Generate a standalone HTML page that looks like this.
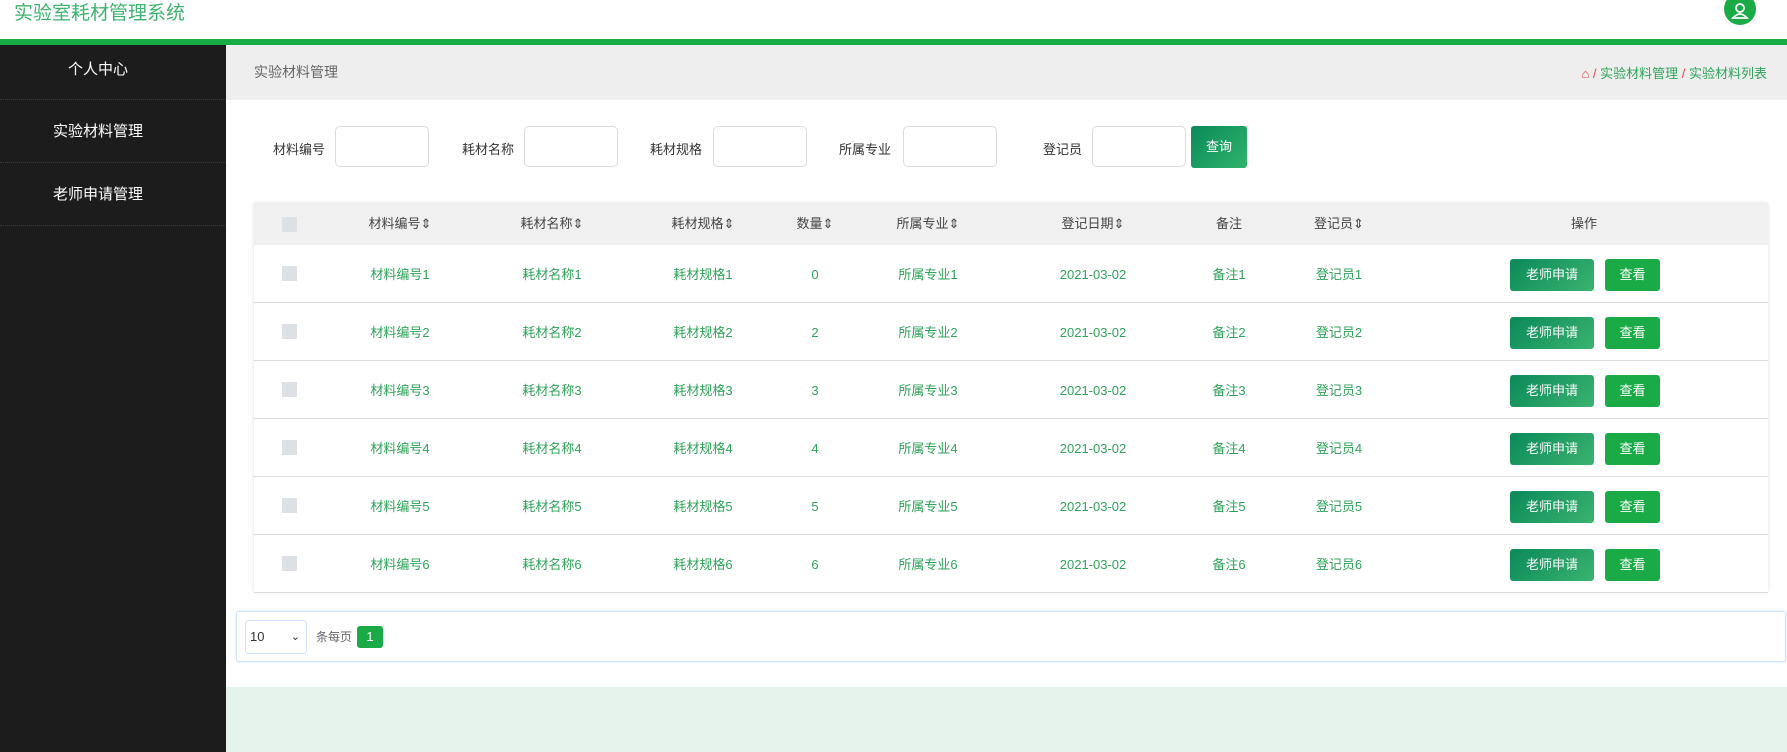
<!DOCTYPE html>
<html><head><meta charset="utf-8"><style>
*{margin:0;padding:0;box-sizing:border-box}
body{width:1787px;height:752px;overflow:hidden;background:#fff;font-family:"Liberation Sans","Noto Sans CJK SC",sans-serif;position:relative}
.a{position:absolute}
.title{left:14px;top:-2px;font-size:19px;color:#3cb371}
.gl{left:0;top:39px;width:1787px;height:6px;background:#1aab47}
.av{left:1724px;top:-7px;width:32px;height:32px;border-radius:50%;background:#1aab47}
.side{left:0;top:45px;width:226px;height:707px;background:#1c1c1c}
.si{position:absolute;left:0;width:226px;border-bottom:1px dotted #3a3a3a;color:#fff;font-size:15px;text-align:center;padding-right:30px}
.bc{left:226px;top:45px;width:1561px;height:55px;background:#eee}
.lab{font-size:13px;color:#333}
.inp{height:41px;width:94px;border:1px solid #ddd;border-radius:5px;background:#fff}
.btn{color:#fff;font-size:13px;text-align:center;border-radius:3px}
.tbl{left:254px;top:203px;width:1514px;height:389px;box-shadow:0 0 4px rgba(0,0,0,.12);background:#fff}
.th{top:0;height:42px;left:0;width:1514px;background:#f0f0f0}
.c{position:absolute;transform:translateX(-50%);font-size:13px;white-space:nowrap;line-height:16px;height:16px}
.hd{color:#444;top:13px}
.row{position:absolute;left:0;width:1514px;height:58px;border-bottom:1px solid #ddd}
.row .c{color:#2fa35a;top:22px}
.cb{position:absolute;left:28px;width:15px;height:15px;background:#dde0e4}
</style></head><body>
<div class="a title">实验室耗材管理系统</div>
<div class="a av"><svg width="32" height="32" viewBox="0 0 32 32"><circle cx="16" cy="15" r="4" fill="none" stroke="#fff" stroke-width="1.8"/><path d="M9 25 q7-8 14 0 z" fill="none" stroke="#fff" stroke-width="1.8"/></svg></div>
<div class="a gl"></div>
<div class="a side">
<div class="si" style="top:0;height:55px;line-height:50px">个人中心</div>
<div class="si" style="top:55px;height:63px;line-height:63px">实验材料管理</div>
<div class="si" style="top:118px;height:63px;line-height:63px">老师申请管理</div>
</div>
<div class="a bc"><span class="a" style="left:28px;top:17px;font-size:14px;color:#666">实验材料管理</span>
<span class="a" style="right:20px;top:18px;font-size:13px;color:#2fa35a;white-space:nowrap"><span style="color:#e44">⌂ /</span> 实验材料管理 <span style="color:#e44">/</span> 实验材料列表</span></div>

<span class="a lab" style="left:273px;top:139px">材料编号</span><div class="a inp" style="left:335px;top:126px"></div>
<span class="a lab" style="left:462px;top:139px">耗材名称</span><div class="a inp" style="left:524px;top:126px"></div>
<span class="a lab" style="left:650px;top:139px">耗材规格</span><div class="a inp" style="left:713px;top:126px"></div>
<span class="a lab" style="left:839px;top:139px">所属专业</span><div class="a inp" style="left:903px;top:126px"></div>
<span class="a lab" style="left:1043px;top:139px">登记员</span><div class="a inp" style="left:1092px;top:126px"></div>
<div class="a btn" style="left:1191px;top:126px;width:56px;height:42px;line-height:42px;background:linear-gradient(135deg,#0a8a5a,#2fb36b)">查询</div>

<div class="a tbl">
<div class="a th">
<div class="cb" style="top:14px"></div>
<span class="c hd" style="left:146px">材料编号⇕</span>
<span class="c hd" style="left:298px">耗材名称⇕</span>
<span class="c hd" style="left:449px">耗材规格⇕</span>
<span class="c hd" style="left:561px">数量⇕</span>
<span class="c hd" style="left:674px">所属专业⇕</span>
<span class="c hd" style="left:839px">登记日期⇕</span>
<span class="c hd" style="left:975px">备注</span>
<span class="c hd" style="left:1085px">登记员⇕</span>
<span class="c hd" style="left:1330px">操作</span>
</div>
<div class="row" style="top:42px"><div class="cb" style="top:21px"></div><span class="c" style="left:146px">材料编号1</span><span class="c" style="left:298px">耗材名称1</span><span class="c" style="left:449px">耗材规格1</span><span class="c" style="left:561px">0</span><span class="c" style="left:674px">所属专业1</span><span class="c" style="left:839px">2021-03-02</span><span class="c" style="left:975px">备注1</span><span class="c" style="left:1085px">登记员1</span><div class="a btn" style="left:1256px;top:14px;width:84px;height:32px;line-height:32px;background:linear-gradient(135deg,#0a8a5a,#3bb36f)">老师申请</div><div class="a btn" style="left:1351px;top:14px;width:55px;height:32px;line-height:32px;background:#1aab47">查看</div></div>
<div class="row" style="top:100px"><div class="cb" style="top:21px"></div><span class="c" style="left:146px">材料编号2</span><span class="c" style="left:298px">耗材名称2</span><span class="c" style="left:449px">耗材规格2</span><span class="c" style="left:561px">2</span><span class="c" style="left:674px">所属专业2</span><span class="c" style="left:839px">2021-03-02</span><span class="c" style="left:975px">备注2</span><span class="c" style="left:1085px">登记员2</span><div class="a btn" style="left:1256px;top:14px;width:84px;height:32px;line-height:32px;background:linear-gradient(135deg,#0a8a5a,#3bb36f)">老师申请</div><div class="a btn" style="left:1351px;top:14px;width:55px;height:32px;line-height:32px;background:#1aab47">查看</div></div>
<div class="row" style="top:158px"><div class="cb" style="top:21px"></div><span class="c" style="left:146px">材料编号3</span><span class="c" style="left:298px">耗材名称3</span><span class="c" style="left:449px">耗材规格3</span><span class="c" style="left:561px">3</span><span class="c" style="left:674px">所属专业3</span><span class="c" style="left:839px">2021-03-02</span><span class="c" style="left:975px">备注3</span><span class="c" style="left:1085px">登记员3</span><div class="a btn" style="left:1256px;top:14px;width:84px;height:32px;line-height:32px;background:linear-gradient(135deg,#0a8a5a,#3bb36f)">老师申请</div><div class="a btn" style="left:1351px;top:14px;width:55px;height:32px;line-height:32px;background:#1aab47">查看</div></div>
<div class="row" style="top:216px"><div class="cb" style="top:21px"></div><span class="c" style="left:146px">材料编号4</span><span class="c" style="left:298px">耗材名称4</span><span class="c" style="left:449px">耗材规格4</span><span class="c" style="left:561px">4</span><span class="c" style="left:674px">所属专业4</span><span class="c" style="left:839px">2021-03-02</span><span class="c" style="left:975px">备注4</span><span class="c" style="left:1085px">登记员4</span><div class="a btn" style="left:1256px;top:14px;width:84px;height:32px;line-height:32px;background:linear-gradient(135deg,#0a8a5a,#3bb36f)">老师申请</div><div class="a btn" style="left:1351px;top:14px;width:55px;height:32px;line-height:32px;background:#1aab47">查看</div></div>
<div class="row" style="top:274px"><div class="cb" style="top:21px"></div><span class="c" style="left:146px">材料编号5</span><span class="c" style="left:298px">耗材名称5</span><span class="c" style="left:449px">耗材规格5</span><span class="c" style="left:561px">5</span><span class="c" style="left:674px">所属专业5</span><span class="c" style="left:839px">2021-03-02</span><span class="c" style="left:975px">备注5</span><span class="c" style="left:1085px">登记员5</span><div class="a btn" style="left:1256px;top:14px;width:84px;height:32px;line-height:32px;background:linear-gradient(135deg,#0a8a5a,#3bb36f)">老师申请</div><div class="a btn" style="left:1351px;top:14px;width:55px;height:32px;line-height:32px;background:#1aab47">查看</div></div>
<div class="row" style="top:332px"><div class="cb" style="top:21px"></div><span class="c" style="left:146px">材料编号6</span><span class="c" style="left:298px">耗材名称6</span><span class="c" style="left:449px">耗材规格6</span><span class="c" style="left:561px">6</span><span class="c" style="left:674px">所属专业6</span><span class="c" style="left:839px">2021-03-02</span><span class="c" style="left:975px">备注6</span><span class="c" style="left:1085px">登记员6</span><div class="a btn" style="left:1256px;top:14px;width:84px;height:32px;line-height:32px;background:linear-gradient(135deg,#0a8a5a,#3bb36f)">老师申请</div><div class="a btn" style="left:1351px;top:14px;width:55px;height:32px;line-height:32px;background:#1aab47">查看</div></div>
</div>

<div class="a" style="left:236px;top:611px;width:1550px;height:51px;border:1px solid #cfe2ff;border-radius:3px;box-shadow:0 0 3px #d6e6ff">
<div class="a" style="left:8px;top:8px;width:62px;height:34px;border:1px solid #cfe2ff;border-radius:4px;font-size:13px;color:#333;line-height:32px;padding-left:4px">10<span style="position:absolute;right:6px;font-size:11px">⌄</span></div>
<span class="a" style="left:79px;top:16px;font-size:12px;color:#666">条每页</span>
<div class="a btn" style="left:120px;top:14px;width:26px;height:22px;line-height:22px;background:#1aab47">1</div>
</div>
<div class="a" style="left:226px;top:687px;width:1561px;height:65px;background:#e6f3ec"></div>
</body></html>
